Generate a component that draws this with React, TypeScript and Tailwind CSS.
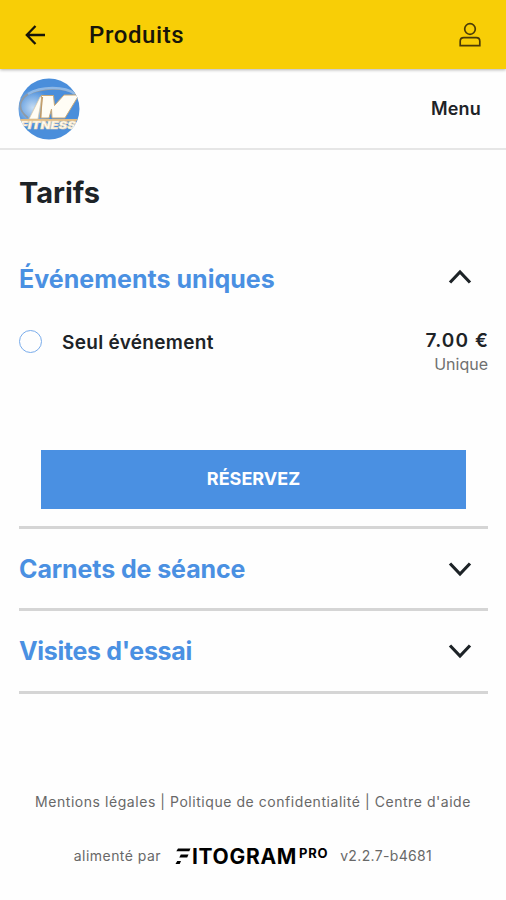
import { useState } from "react";

type ChevronProps = {
  up?: boolean;
};

function Chevron({ up = false }: ChevronProps) {
  return (
    <svg width="24" height="16" viewBox="0 0 24 16" fill="none" stroke="#1d2327" strokeWidth="3.2" className={up ? "mb-[4px] rotate-180" : ""}>
      <path d="M2 2.5 L12 13 L22 2.5" />
    </svg>
  );
}

function ClubLogo() {
  return (
    <svg width="62" height="62" viewBox="0 0 62 62" className="mt-[1px]">
      <defs>
        <clipPath id="club-clip">
          <circle cx="31" cy="31" r="30.5" />
        </clipPath>
        <radialGradient id="club-glow" cx="0.24" cy="0.48" r="0.3">
          <stop offset="0" stopColor="#c5dcf3" />
          <stop offset="1" stopColor="#4a8edb" />
        </radialGradient>
      </defs>
      <g clipPath="url(#club-clip)">
        <rect width="62" height="62" fill="url(#club-glow)" />
        <path d="M10 40 C-4 29 2 15 24 12 C40 9 54 12 60 18" fill="none" stroke="#8f9aa5" strokeWidth="1.8" />
        <path d="M10 16 C23 8 47 8 57 16" fill="none" stroke="#8fb8e5" strokeWidth="2.4" />
        {/* thin left leg of the M */}
        <path d="M11 41 L22 19 L24 18 L20 41 Z" fill="#fffdf5" stroke="#d9c49c" strokeWidth="0.7" />
        {/* the wide N-shaped part */}
        <path d="M23.5 17.5 H35.5 L36.5 27.5 L46 17 H61 L47 40 H34 L33.5 31 L31 40 H23 Z" fill="#fffdf5" stroke="#c9a876" strokeWidth="1" />
        <path d="M24.5 19 L22.3 40" stroke="#c09a66" strokeWidth="1.2" />
        <path d="M0 41 H60 L58 43.5 H2 Z" fill="#e0bd88" />
        <text x="2" y="51" textLength="56" lengthAdjust="spacingAndGlyphs" fontFamily="Inter, sans-serif" fontSize="11" fontWeight="900" fontStyle="italic" fill="#fffaf0" stroke="#f0dcb6" strokeWidth="0.6">FITNESS</text>
      </g>
    </svg>
  );
}

function UserIcon() {
  return (
    <svg width="24" height="26" viewBox="0 0 24 26" fill="none" stroke="#4a3b08" strokeWidth="1.7">
      <circle cx="12" cy="7" r="5.3" />
      <path d="M2.2 23.6 V19.2 Q2.2 15.6 5.8 15.6 H18.2 Q21.8 15.6 21.8 19.2 V23.6 Z" />
    </svg>
  );
}

function FitogramLogo() {
  return (
    <div className="flex h-[18px] items-start text-black">
      <svg width="16" height="18" viewBox="0 0 16 18" className="mr-[1px]">
        <path d="M3 1.5 H15.5 L14.3 4.3 H1.3 Z M5.8 7.6 H13.5 L12.2 10.4 H4.3 Z M2.2 14 H6 L4.7 17 H0.5 Z" fill="currentColor" />
      </svg>
      <span className="mt-[1px] text-[21px] font-bold leading-[18px] tracking-[0.7px]">ITOGRAM</span>
      <span className="ml-[2px] text-[13px] font-bold leading-[12px] tracking-[0.7px]">PRO</span>
    </div>
  );
}

type SectionTitleProps = {
  title: string;
  open: boolean;
  onClick: () => void;
  className?: string;
};

function SectionTitle({ title, open, onClick, className = "" }: SectionTitleProps) {
  return (
    <button onClick={onClick} className="flex w-full items-center justify-between pr-[16px] text-left">
      <span className={`text-[25px] font-bold leading-8 text-[#4a90e2] ${className}`}>{title}</span>
      <Chevron up={open} />
    </button>
  );
}

export default function App() {
  const [open, setOpen] = useState("events");
  const [selected, setSelected] = useState(false);

  const toggle = (id: string) => setOpen(open === id ? "" : id);

  return (
    <div className="flex h-[900px] w-[506px] flex-col overflow-hidden bg-[#fefefe] font-['Inter',sans-serif] text-[#1d2327]">
      <header className="z-10 flex h-[69px] shrink-0 items-center bg-[#f8ce06] pl-[25px] pr-[24px] shadow-[0_1px_3px_rgba(0,0,0,0.3)]">
        <svg width="21" height="20" viewBox="0 0 21 20" fill="none" stroke="#17150a" strokeWidth="2.3">
          <path d="M20 10 H2 M10.5 1 L1.8 10 L10.5 19" />
        </svg>
        <h1 className="ml-[43px] font-['Roboto',sans-serif] text-2xl font-medium tracking-[0.6px] text-[#17150a]">Produits</h1>
        <div className="ml-auto">
          <UserIcon />
        </div>
      </header>

      <nav className="flex h-[81px] shrink-0 items-center justify-between border-b-2 border-[#e6e6e6] pl-[18px] pr-[25px]">
        <ClubLogo />
        <span className="text-[18px] font-semibold tracking-[0.2px]">Menu</span>
      </nav>

      <main className="pl-[19px] pr-[18px]">
        <h2 className="mt-[25px] text-[29px] font-bold leading-9 tracking-[-0.05px]">Tarifs</h2>

        <section className="mt-[52px] h-[266px] border-b-[3px] border-[#d5d5d5]">
          <SectionTitle title="Événements uniques" open={open === "events"} onClick={() => toggle("events")} className="tracking-[0.02px]" />
          <div className="mt-[34px] flex h-[46px] items-start">
            <button
              onClick={() => setSelected(!selected)}
              className={`mt-[1px] size-[23px] rounded-full border-[1.5px] border-[#79aceb] ${selected ? "bg-[#4a90e2]" : ""}`}
            />
            <span className="ml-[20px] mt-[2px] text-[19px] font-semibold leading-6 tracking-[0.3px]">Seul événement</span>
            <div className="ml-auto flex flex-col items-end">
              <span className="mr-[-1px] text-[19px] font-semibold leading-6 tracking-[1.1px]">7.00 €</span>
              <span className="-mt-[1px] text-base leading-6 text-[#707070]">Unique</span>
            </div>
          </div>
          <button className="mx-[22px] mt-[75px] flex h-[59px] w-[425px] items-center justify-center bg-[#4a90e2] pb-[2px] text-[18px] font-bold text-white">
            <span>RÉSERVEZ</span>
          </button>
        </section>

        <section className="flex h-[82px] items-center border-b-[3px] border-[#d5d5d5]">
          <SectionTitle title="Carnets de séance" open={open === "cards"} onClick={() => toggle("cards")} className="tracking-[-0.1px]" />
        </section>
        <section className="flex h-[83px] items-center border-b-[3px] border-[#d5d5d5]">
          <SectionTitle title="Visites d'essai" open={open === "trials"} onClick={() => toggle("trials")} className="tracking-[-0.33px]" />
        </section>
      </main>

      <footer className="mt-auto flex flex-col items-center pb-[34px] text-[#686868]">
        <p className="whitespace-nowrap text-[14px] leading-5 tracking-[0.55px]">Mentions légales | Politique de confidentialité | Centre d'aide</p>
        <div className="mt-[34px] flex h-5 items-center">
          <span className="mb-[2px] text-[14px] tracking-[0.45px]">alimenté par</span>
          <div className="ml-[14px] mr-[12px]">
            <FitogramLogo />
          </div>
          <span className="mb-[2px] text-[14px] tracking-[0.35px]">v2.2.7-b4681</span>
        </div>
      </footer>
    </div>
  );
}
